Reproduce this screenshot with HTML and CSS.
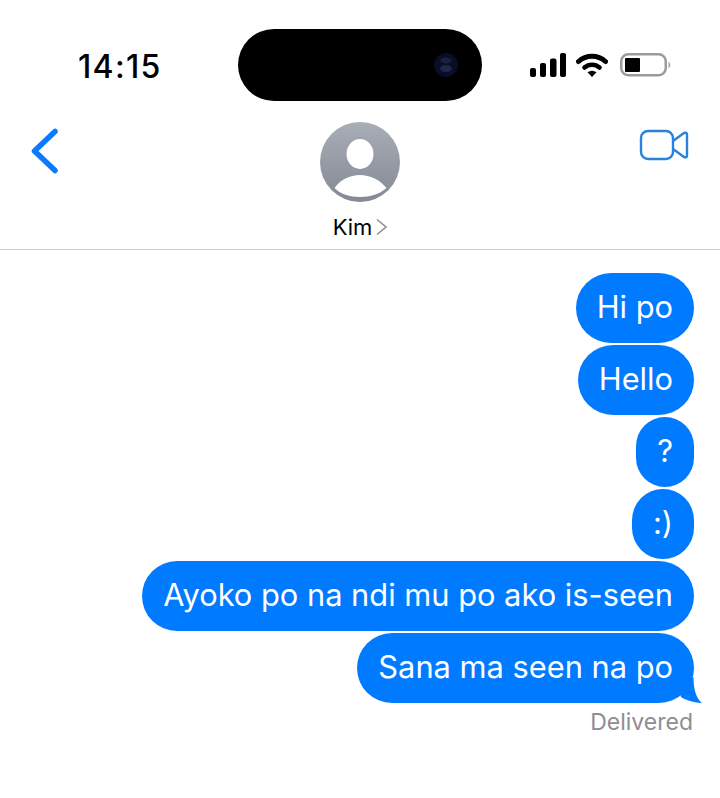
FILE: index.html
```html
<!DOCTYPE html>
<html lang="en">
<head>
  <meta charset="UTF-8" />
  <meta name="viewport" content="width=device-width, initial-scale=1.0" />
  <title>Kim</title>
  <link rel="stylesheet" href="styles.css">
</head>
<body>
  <div class="status-bar">
    <div class="status-time">14:15</div>
    <div class="island">
      <svg class="island-cam" width="24" height="24" viewBox="0 0 24 24">
        <circle cx="12" cy="12" r="12" fill="#0a0d26" />
        <ellipse cx="12" cy="7.500" rx="5.500" ry="3" fill="#1a2040" />
        <ellipse cx="12" cy="15.500" rx="6" ry="3.500" fill="#1f2648" />
      </svg>
    </div>
    <div class="status-icons">
      <svg width="36" height="24" viewBox="0 0 36 24">
        <rect x="0" y="15" width="6" height="9" rx="2" fill="#000" />
        <rect x="10" y="10" width="6" height="14" rx="2" fill="#000" />
        <rect x="20" y="5.500" width="6.500" height="18.500" rx="2" fill="#000" />
        <rect x="30" y="0" width="6" height="24" rx="2" fill="#000" />
      </svg>
      <svg class="wifi" width="32" height="24" viewBox="0 0 32 24">
        <path d="M2.500 8.500A20 20 0 0 1 29.500 8.500" fill="none" stroke="#000" stroke-width="5" stroke-linecap="round" />
        <path d="M8.500 14.500A11.500 11.500 0 0 1 23.500 14.500" fill="none" stroke="#000" stroke-width="4.600" stroke-linecap="round" />
        <path d="M11.500 19.300Q16 16.200 20.500 19.300L16 24Z" fill="#000" />
      </svg>
      <svg class="battery" width="53" height="24" viewBox="0 0 53 24">
        <rect x="1.250" y="1.250" width="44.500" height="21" rx="7" fill="none" stroke="#9b9b9b" stroke-width="2.500" />
        <rect x="5" y="5" width="15" height="14" rx="1" fill="#000" />
        <path d="M48.500 8.500Q52.500 11.800 48.500 15.500Z" fill="#aaa" />
      </svg>
    </div>
  </div>

  <div class="nav-bar">
    <svg class="nav-back" width="28" height="46" viewBox="0 0 28 46">
      <path d="M24 3.500L3.500 23L24 42.500" fill="none" stroke="#0a7aff" stroke-width="5.500" stroke-linecap="round" stroke-linejoin="round" />
    </svg>
    <div class="contact">
      <svg width="80" height="80" viewBox="0 0 80 80">
        <defs>
          <linearGradient id="avatarFill" x1="0" y1="0" x2="0" y2="1">
            <stop offset="0" stop-color="#a9adb6" />
            <stop offset="1" stop-color="#858994" />
          </linearGradient>
        </defs>
        <circle cx="40" cy="40" r="40" fill="url(#avatarFill)" />
        <ellipse cx="40" cy="32" rx="13.500" ry="15" fill="#fff" />
        <path d="M14.500 66C20 58 30 53 40 53C50 53 60 58 66.500 66C60 72 50 75 40 75C30 75 20 72 14.500 66Z" fill="#fff" />
      </svg>
      <div class="contact-name">
        <span>Kim</span>
        <svg width="11" height="18" viewBox="0 0 11 18">
          <path d="M1 1.500L10 9L1 16.500" fill="none" stroke="#8e8e93" stroke-width="1.600" />
        </svg>
      </div>
    </div>
    <svg class="nav-video" width="50" height="32" viewBox="0 0 50 32">
      <rect x="2" y="2" width="32" height="28" rx="7" fill="none" stroke="#2a82dc" stroke-width="2.400" />
      <path d="M34 12L45 4Q48 3 48 5.500V26.500Q48 29 45 28L34 20" fill="none" stroke="#2a82dc" stroke-width="2.400" stroke-linejoin="round" />
    </svg>
  </div>

  <div class="messages">
    <div class="bubble">Hi po</div>
    <div class="bubble">Hello</div>
    <div class="bubble">?</div>
    <div class="bubble">:)</div>
    <div class="bubble">Ayoko po na ndi mu po ako is-seen</div>
    <div class="bubble">
      Sana ma seen na po
      <svg class="bubble-tail" width="30" height="26" viewBox="0 0 30 26">
        <path d="M20.500 0C20.500 12 23 21 29 26C22 25.500 14 24 8 20L5 10Z" fill="#007aff" />
      </svg>
    </div>
    <div class="delivered">Delivered</div>
  </div>
</body>
</html>
```

FILE: styles.css
```css
* {
  margin: 0;
  padding: 0;
  box-sizing: border-box;
}
html, body {
  height: 100%;
  background: #ffffff;
  font-family: 'Inter', 'Liberation Sans', sans-serif;
  overflow: hidden;
}
svg {
  display: block;
}
.status-bar {
  display: grid;
  grid-template-columns: 238px 244px 1fr;
  align-items: center;
  padding-top: 29px;
}
.status-time {
  padding: 2px 0 0 78px;
  font-size: 32px;
  font-weight: 500;
  letter-spacing: 1.300px;
  color: #000;
}
.island {
  height: 72px;
  background: #000;
  border-radius: 36px;
  display: flex;
  align-items: center;
  justify-content: flex-end;
  padding-right: 24px;
}
.status-icons {
  display: flex;
  align-items: center;
  justify-content: flex-end;
  gap: 10px;
  padding-right: 47px;
}
.battery {
  margin-left: 2px;
}
.nav-bar {
  display: grid;
  grid-template-columns: 1fr auto 1fr;
  align-items: start;
  height: 149px;
  padding-top: 21px;
  border-bottom: 1px solid #d0d0d0;
}
.nav-back {
  margin: 6px 0 0 31px;
}
.nav-video {
  justify-self: end;
  margin: 7px 31px 0 0;
}
.contact {
  display: flex;
  flex-direction: column;
  align-items: center;
}
.contact-name {
  display: flex;
  align-items: center;
  gap: 4px;
  margin-top: 12px;
  font-size: 22px;
  color: #000;
}
.messages {
  display: flex;
  flex-direction: column;
  align-items: flex-end;
  gap: 2px;
  padding: 23px 26px 0 0;
}
.bubble {
  position: relative;
  height: 70px;
  line-height: 68px;
  padding: 0 21px;
  background: #007aff;
  color: #fff;
  font-size: 30.800px;
  border-radius: 35px;
  white-space: nowrap;
}
.bubble-tail {
  position: absolute;
  right: -9px;
  bottom: 0;
}
.delivered {
  margin: 3px 1px 0 0;
  font-size: 23px;
  color: #8e8e93;
}
```
